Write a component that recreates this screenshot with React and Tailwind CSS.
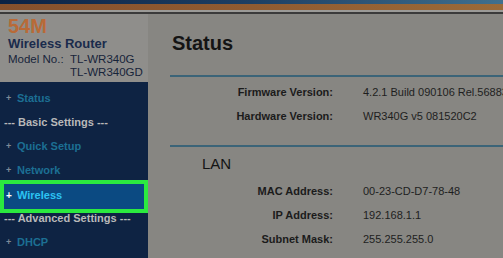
import React from 'react'

const font = { fontFamily: '"Liberation Sans", Arial, sans-serif' }

function NavItem({ label, active }) {
  if (active) {
    return (
      <div className="-mt-[2px] -mb-[7px] flex h-[33px] items-center border-4 border-[#2bea3f] bg-[#0b4a82] pb-[2px] pl-[2px]">
        <span className="w-[11px] text-[10px] font-bold leading-none text-white">+</span>
        <span className="text-[11px] font-bold text-[#2cc3f2]">{label}</span>
      </div>
    )
  }
  return (
    <div className="flex h-[24px] items-center pl-[6px]">
      <span className="w-[11px] text-[9px] font-bold leading-none text-[#7d8a98]">+</span>
      <span className="text-[11px] font-bold text-[#1c6f93]">{label}</span>
    </div>
  )
}

function NavGroup({ label }) {
  return (
    <div className="flex h-[24px] items-center pl-[4px] text-[11px] font-bold text-[#b9b9b9]">
      {label}
    </div>
  )
}

function Row({ label, value }) {
  return (
    <div className="flex h-[24px] items-center whitespace-nowrap text-[11px]">
      <span className="w-[185px] shrink-0 text-right font-bold text-[#1b1b1b]">{label}</span>
      <span className="ml-[30px] text-[#1e1e1e]">{value}</span>
    </div>
  )
}

export default function App() {
  return (
    <div style={font} className="flex h-[258px] w-[503px] flex-col overflow-hidden bg-[#878682]">
      <div className="h-[4px] bg-gradient-to-r from-[#0b2244] via-[#1d3f63] to-[#40708e]" />
      <div className="h-[6px] bg-gradient-to-r from-[#85502c] via-[#8f5b31] to-[#9a6a38]" />
      <div className="h-[2px] bg-[#9b9a97]" />
      <div className="h-[2px] bg-[#3a3a3a]" />

      <div className="flex flex-1">
        <aside className="flex w-[148px] shrink-0 flex-col">
          <div className="h-[68px] bg-[#8f8e8b] pl-[8px] pt-[2px]">
            <div className="text-[20px] font-bold leading-[20px] text-[#b96a37]">54M</div>
            <div className="text-[13px] font-bold leading-[15px] text-[#1a2b4c]">Wireless Router</div>
            <div className="mt-[2px] flex text-[11.5px] leading-[13px] text-[#17243a]">
              <span className="w-[62px] shrink-0">Model No.:</span>
              <span>
                TL-WR340G
                <br />
                TL-WR340GD
              </span>
            </div>
          </div>
          <nav className="flex-1 bg-[#0e2343] pt-[4px]">
            <NavItem label="Status" />
            <NavGroup label="--- Basic Settings ---" />
            <NavItem label="Quick Setup" />
            <NavItem label="Network" />
            <NavItem label="Wireless" active />
            <NavGroup label="--- Advanced Settings ---" />
            <NavItem label="DHCP" />
          </nav>
        </aside>

        <main className="min-w-0 flex-1">
          <h1 className="ml-[24px] mt-[17px] text-[20px] font-bold leading-[24px] text-[#141414]">Status</h1>
          <div className="ml-[22px] mt-[20px] h-[2px] bg-[#3b6478]" />
          <div className="pt-[3px]">
            <Row label="Firmware Version:" value="4.2.1 Build 090106 Rel.56883n" />
            <Row label="Hardware Version:" value="WR340G v5 081520C2" />
          </div>
          <div className="ml-[22px] mt-[17px] h-[2px] bg-[#3b6478]" />
          <div className="ml-[54px] mt-[6px] flex h-[22px] items-center text-[15px] text-[#141414]">LAN</div>
          <div className="mt-[4px]">
            <Row label="MAC Address:" value="00-23-CD-D7-78-48" />
            <Row label="IP Address:" value="192.168.1.1" />
            <Row label="Subnet Mask:" value="255.255.255.0" />
          </div>
        </main>
      </div>
    </div>
  )
}
